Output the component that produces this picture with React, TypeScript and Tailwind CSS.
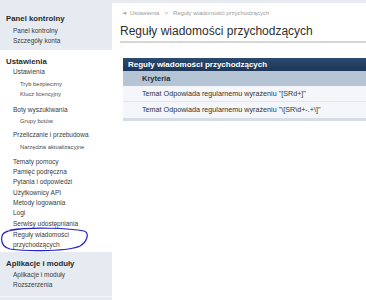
import React from 'react';

const font = { fontFamily: '"Liberation Sans", Arial, sans-serif' };

const Item = ({ children, className = '' }: { children: React.ReactNode; className?: string }) => (
  <div className={`pl-[13px] text-[6.5px] leading-[10px] text-[#3a3a3a] whitespace-nowrap ${className}`}>{children}</div>
);

const SubItem = ({ children, className = '' }: { children: React.ReactNode; className?: string }) => (
  <div className={`pl-[20px] text-[5.8px] leading-[10px] text-[#4a4a4a] whitespace-nowrap ${className}`}>{children}</div>
);

const Heading = ({ children }: { children: React.ReactNode }) => (
  <div className="pl-[6px] text-[7.8px] leading-[11px] font-bold text-[#2a2a2a] whitespace-nowrap">{children}</div>
);

export default function App() {
  return (
    <div style={font} className="relative flex h-[300px] w-[366px] overflow-hidden bg-[#e8ecf2]">
      {/* Sidebar */}
      <aside className="flex w-[112px] shrink-0 flex-col">
        <div className="h-[50px] bg-[#e6ebf1] pt-[12.5px]">
          <Heading>Panel kontrolny</Heading>
          <Item className="mt-[2px]">Panel kontrolny</Item>
          <Item>Szczegóły konta</Item>
        </div>

        <div className="h-[202px] bg-white pt-[6px]">
          <Heading>Ustawienia</Heading>
          <Item>Ustawienia</Item>
          <SubItem className="mt-[2px]">Tryb bezpieczny</SubItem>
          <SubItem>Klucz licencyjny</SubItem>
          <Item className="mt-[6px]">Boty wyszukiwania</Item>
          <SubItem className="mt-[1px]">Grupy botów</SubItem>
          <Item className="mt-[4px]">Przeliczanie i przebudowa</Item>
          <SubItem className="mt-[2px]">Narzędzia aktualizacyjne</SubItem>
          <Item className="mt-[5px]">Tematy pomocy</Item>
          <Item>Pamięć podręczna</Item>
          <Item>Pytania i odpowiedzi</Item>
          <Item className="mt-[1px]">Użytkownicy API</Item>
          <Item>Metody logowania</Item>
          <Item>Logi</Item>
          <Item className="mt-[1px]">Serwisy udostępniania</Item>
          <Item className="mt-[1px] leading-[9px]">
            Reguły wiadomości
            <br />
            przychodzących
          </Item>
        </div>

        <div className="flex-1 bg-[#e6ebf1] pt-[5.5px]">
          <Heading>Aplikacje i moduły</Heading>
          <Item className="mt-[1.5px]">Aplikacje i moduły</Item>
          <Item>Rozszerzenia</Item>
          <div className="mt-[6px] border-t border-[#f4f6f9]" />
        </div>
      </aside>

      {/* Main */}
      <main className="mt-[3px] flex-1 bg-white pl-[8px]">
        <div className="flex items-center gap-[3px] pl-[2px] pt-[6px] text-[6px] leading-[8px] text-[#9a9a9a] whitespace-nowrap">
          <span className="text-[6px]" style={{ fontFamily: '"DejaVu Sans", sans-serif' }}>➜</span>
          <span>Ustawienia</span>
          <span className="px-[2px]">&gt;</span>
          <span>Reguły wiadomości przychodzących</span>
        </div>

        <h1 className="mt-[6.5px] border-b-2 border-[#d6d6d6] pb-[2.5px] text-[12px] leading-[15px] font-normal text-[#2e2e2e] whitespace-nowrap">
          Reguły wiadomości przychodzących
        </h1>

        <div className="ml-[3px] mt-[15px] border-b-[3px] border-[#d3dce7]">
          <div className="h-[13px] bg-gradient-to-b from-[#2c4a6e] to-[#1c3757] pl-[5px] text-[8px] leading-[13px] font-bold text-white whitespace-nowrap">
            Reguły wiadomości przychodzących
          </div>
          <div className="h-[15px] bg-[#b6c5d6] pl-[19px] text-[7.5px] leading-[15px] font-bold text-[#24303d]">
            Kryteria
          </div>
          <div className="h-[16px] border-b border-[#e3e8ee] bg-[#f4f6f9] pl-[19px] text-[7.2px] leading-[15px] text-[#333] whitespace-nowrap">
            Temat Odpowiada regularnemu wyrażeniu "[SRd+]"
          </div>
          <div className="h-[16px] bg-[#f4f6f9] pl-[19px] text-[7.2px] leading-[16px] text-[#333] whitespace-nowrap">
            Temat Odpowiada regularnemu wyrażeniu "\[SR\d+-.+\]"
          </div>
        </div>
      </main>

      {/* hand-drawn highlight */}
      <svg className="pointer-events-none absolute left-0 top-[225px]" width="92" height="30" viewBox="0 0 92 30">
        <path
          d="M10 5 C 30 2, 70 3, 84 6 C 90 8, 87 17, 80 21 C 70 26, 30 27, 10 24 C 2 22, 1 16, 2 11 C 3 7, 8 5, 22 4"
          fill="none"
          stroke="#2323c8"
          strokeWidth="1.2"
          strokeLinecap="round"
        />
      </svg>
    </div>
  );
}
